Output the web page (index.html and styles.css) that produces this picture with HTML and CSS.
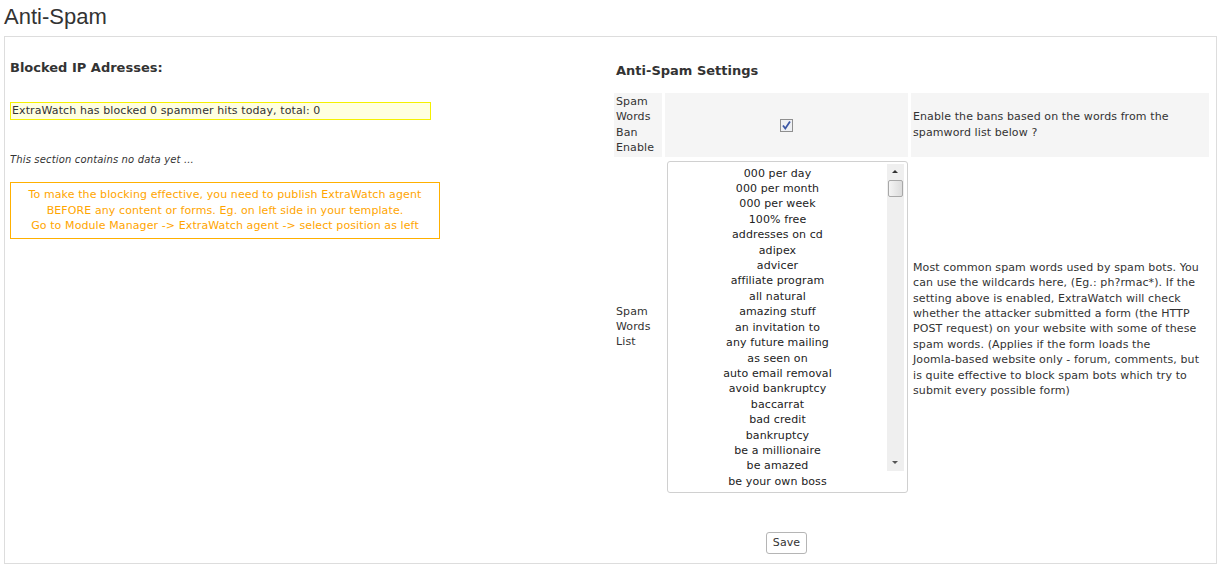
FILE: index.html
```html
<!DOCTYPE html>
<html>
<head>
<meta charset="utf-8">
<title>Anti-Spam</title>
<link rel="stylesheet" href="styles.css">
</head>
<body>
<h1 class="page-title">Anti-Spam</h1>
<div class="panel">
  <div class="col-left">
    <h2 class="section-title">Blocked IP Adresses:</h2>
    <div class="notice-yellow">ExtraWatch has blocked 0 spammer hits today, total: 0</div>
    <p class="nodata">This section contains no data yet ...</p>
    <div class="notice-orange">To make the blocking effective, you need to publish ExtraWatch agent<br>BEFORE any content or forms. Eg. on left side in your template.<br>Go to Module Manager -&gt; ExtraWatch agent -&gt; select position as left</div>
  </div>
  <div class="col-right">
    <h2 class="section-title settings-title">Anti-Spam Settings</h2>
    <table class="settings">
      <tr class="row-shaded">
        <td class="c-label">Spam Words Ban Enable</td>
        <td class="c-input"><span class="checkbox"><svg width="11" height="11" viewBox="0 0 11 11"><path d="M2 5.5 L4.3 8.5 L9 1.5" fill="none" stroke="#3b57a6" stroke-width="1.8"/></svg></span></td>
        <td class="c-desc">Enable the bans based on the words from the spamword list below ?</td>
      </tr>
      <tr>
        <td class="c-label">Spam Words List</td>
        <td class="c-input">
          <div class="listbox">
            <ul class="listbox-items">
              <li>000 per day</li>
              <li>000 per month</li>
              <li>000 per week</li>
              <li>100% free</li>
              <li>addresses on cd</li>
              <li>adipex</li>
              <li>advicer</li>
              <li>affiliate program</li>
              <li>all natural</li>
              <li>amazing stuff</li>
              <li>an invitation to</li>
              <li>any future mailing</li>
              <li>as seen on</li>
              <li>auto email removal</li>
              <li>avoid bankruptcy</li>
              <li>baccarrat</li>
              <li>bad credit</li>
              <li>bankruptcy</li>
              <li>be a millionaire</li>
              <li>be amazed</li>
              <li>be your own boss</li>
            </ul>
            <div class="scrollbar">
              <span class="arrow arrow-up"></span>
              <span class="thumb"></span>
              <span class="track"></span>
              <span class="arrow arrow-down"></span>
            </div>
          </div>
        </td>
        <td class="c-desc c-desc-long">Most common spam words used by spam bots. You can use the wildcards here, (Eg.: ph?rmac*). If the setting above is enabled, ExtraWatch will check whether the attacker submitted a form (the HTTP POST request) on your website with some of these spam words. (Applies if the form loads the Joomla&#8209;based website only - forum, comments, but is quite effective to block spam bots which try to submit every possible form)</td>
      </tr>
      <tr>
        <td class="c-label"></td>
        <td class="c-input c-save"><button class="save-btn">Save</button></td>
        <td class="c-desc"></td>
      </tr>
    </table>
  </div>
</div>
</body>
</html>
```

FILE: styles.css
```css
html, body {
  margin: 0;
  padding: 0;
  background: #ffffff;
}
body {
  font-family: "DejaVu Sans", Verdana, sans-serif;
  font-size: 11px;
  letter-spacing: 0.1px;
  color: #333333;
}
.page-title {
  margin: 0;
  height: 36px;
  padding-left: 4px;
  font-family: "Liberation Sans", Arial, sans-serif;
  font-weight: normal;
  font-size: 22px;
  line-height: 34px;
  letter-spacing: 0;
  color: #333333;
}
.panel {
  width: 1206px;
  height: 526px;
  margin-left: 4px;
  border: 1px solid #dddddd;
  padding: 0 0 0 5px;
  display: grid;
  grid-template-columns: 601px 601px;
  align-items: start;
}
.section-title {
  margin: 0;
  font-size: 13px;
  line-height: 15px;
  font-weight: bold;
  letter-spacing: 0;
  color: #333333;
}
.col-left {
  padding-top: 23px;
}
.notice-yellow {
  margin-top: 27px;
  width: 418px;
  height: 16px;
  border: 1px solid #f5f000;
  background: #ffffe0;
  padding-left: 1px;
  line-height: 16px;
  font-size: 11px;
  color: #333333;
}
.nodata {
  margin: 33px 0 0 0;
  font-size: 10px;
  letter-spacing: 0.15px;
  font-style: italic;
  line-height: 14px;
  color: #333333;
}
.notice-orange {
  margin-top: 15px;
  width: 428px;
  height: 55px;
  border: 1px solid #ffb000;
  text-align: center;
  color: #ffa500;
  font-size: 11px;
  line-height: 15.5px;
  display: flex;
  align-items: center;
  justify-content: center;
}
.col-right {
  padding-top: 26px;
}
.settings-title {
  margin-left: 5px;
}
.settings {
  margin-top: 12px;
  border-collapse: separate;
  border-spacing: 3px;
  width: 601px;
  table-layout: fixed;
}
.settings td {
  padding: 1px 2px;
  line-height: 15.4px;
  vertical-align: middle;
  font-size: 11px;
}
.c-label {
  width: 44px;
}
.c-input {
  width: 239px;
  text-align: center;
}
.c-desc {
  width: 294px;
}
.settings .c-desc-long {
  padding-top: 6px;
}
.row-shaded td {
  background: #f5f5f5;
}
.checkbox {
  display: inline-flex;
  width: 11px;
  height: 11px;
  border: 1px solid #8f8f8f;
  background: #eef0f4;
  vertical-align: middle;
  align-items: center;
  justify-content: center;
}
.listbox {
  display: flex;
  width: 239px;
  height: 330px;
  border: 1px solid #d0d0d0;
  border-radius: 3px;
  background: #ffffff;
  overflow: hidden;
}
.listbox-items {
  list-style: none;
  margin: 0;
  padding: 4px 0 0 0;
  flex: 1;
  text-align: center;
  line-height: 15.4px;
  color: #222222;
}
.scrollbar {
  width: 17px;
  height: 307px;
  margin: 2px 3px 0 0;
  background: #efefef;
  display: flex;
  flex-direction: column;
  align-items: center;
}
.arrow {
  display: block;
  width: 17px;
  height: 16px;
  position: relative;
}
.arrow::after {
  content: "";
  position: absolute;
  left: 5px;
  top: 6px;
  border-left: 3px solid transparent;
  border-right: 3px solid transparent;
}
.arrow-up::after {
  border-bottom: 3px solid #333333;
}
.arrow-down::after {
  border-top: 3px solid #555555;
}
.thumb {
  display: block;
  width: 13px;
  height: 15px;
  border: 1px solid #a8a8a8;
  border-radius: 2px;
  background: linear-gradient(to right, #f4f4f4, #dcdcdc);
}
.track {
  flex: 1;
}
.c-save {
  padding-top: 35px !important;
}
.save-btn {
  width: 41px;
  height: 22px;
  border: 1px solid #b5b5b5;
  border-radius: 3px;
  background: #ffffff;
  font-family: "DejaVu Sans", Verdana, sans-serif;
  font-size: 11px;
  letter-spacing: 0.1px;
  color: #333333;
  padding: 0;
}
```
